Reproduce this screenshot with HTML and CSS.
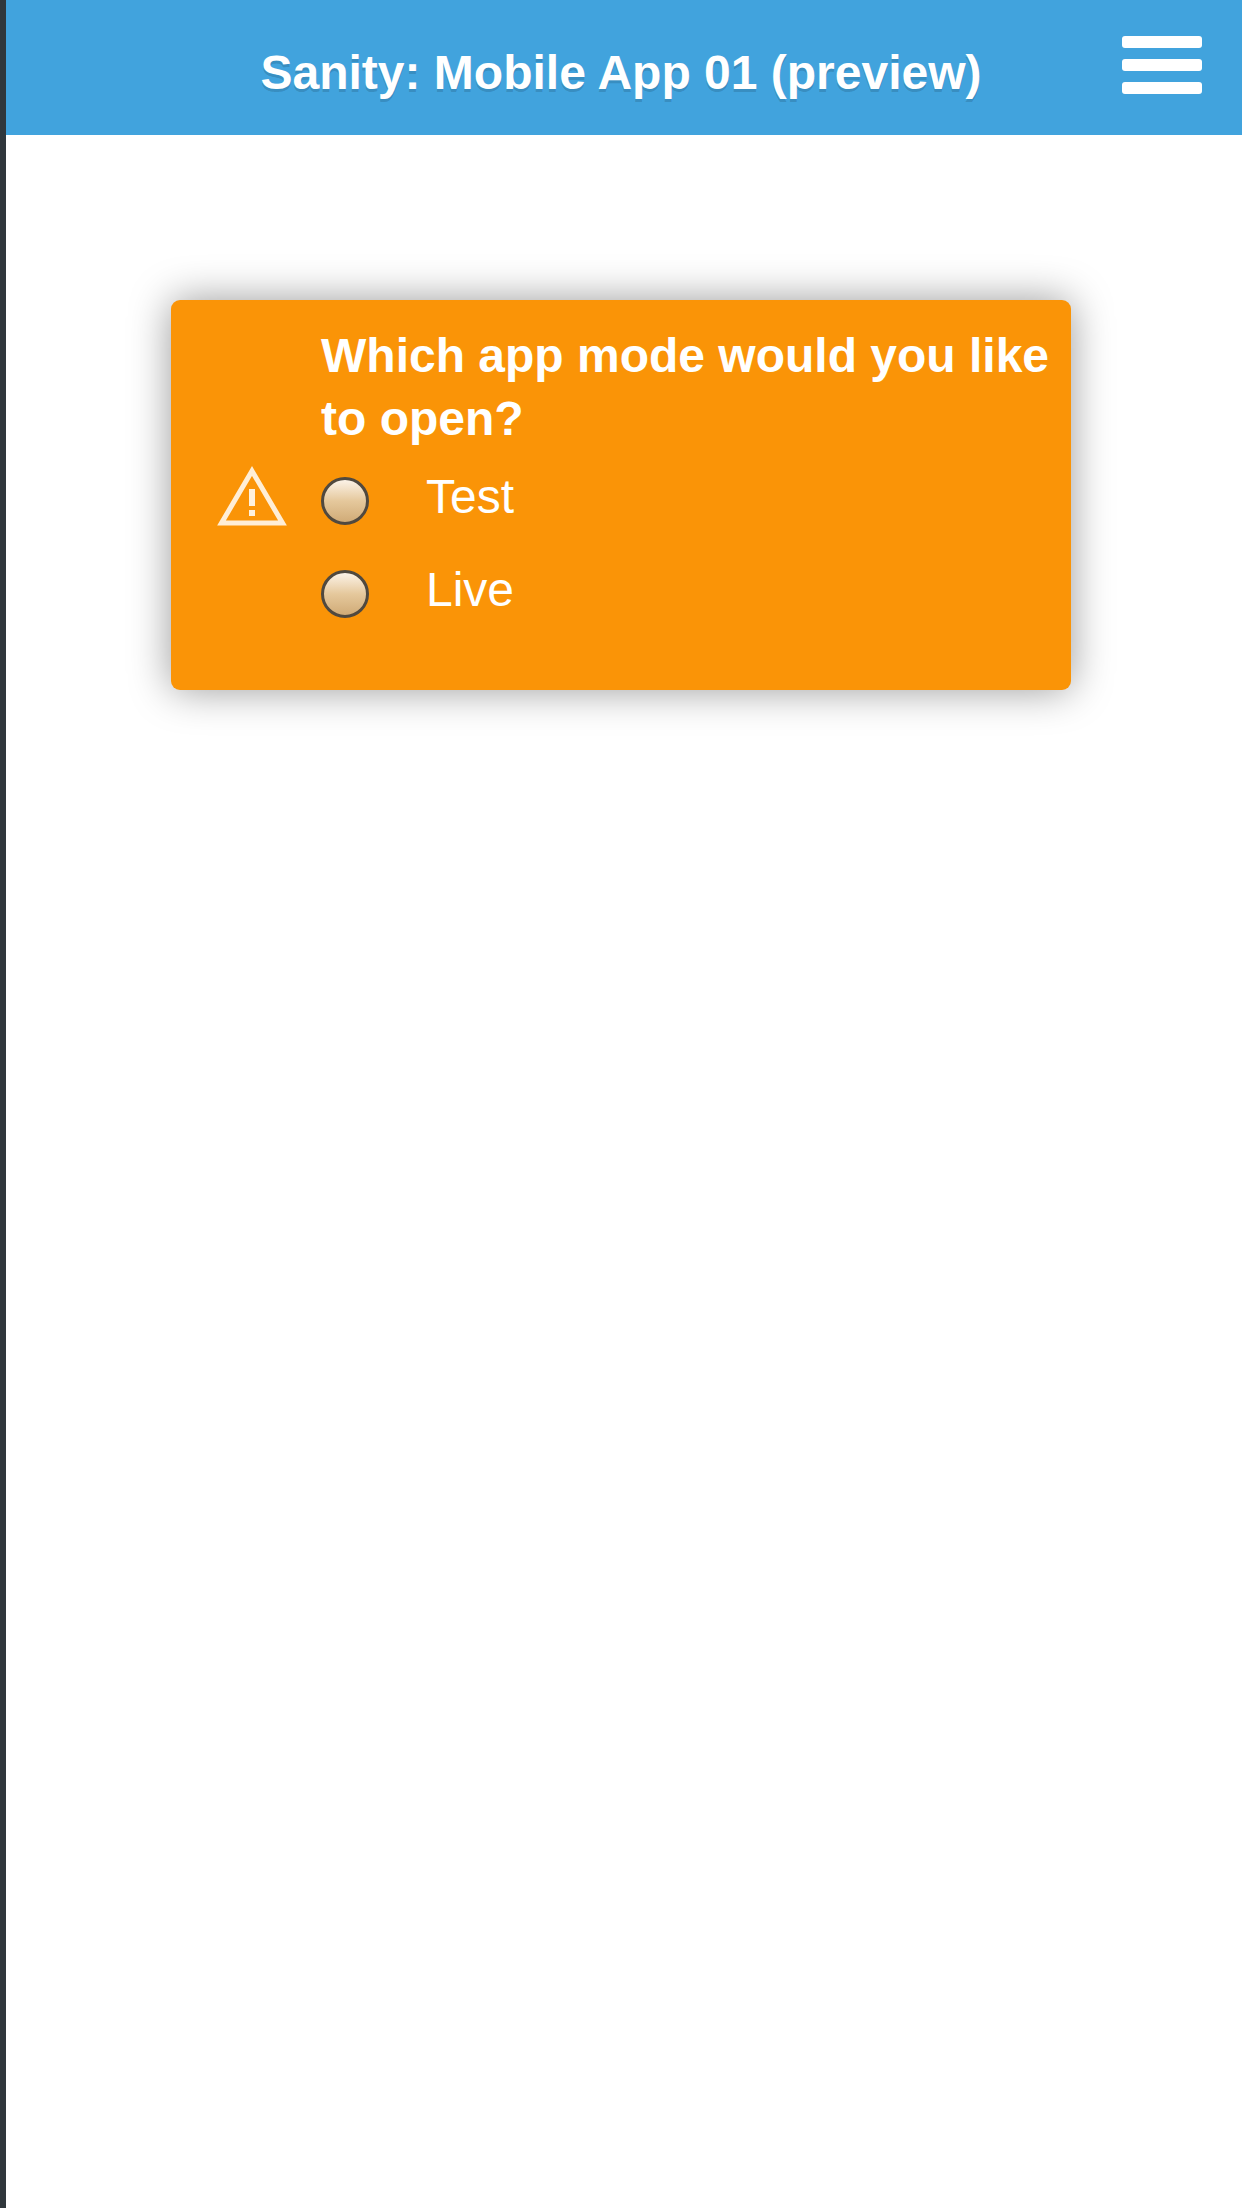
FILE: index.html
```html
<!DOCTYPE html>
<html lang="en">
<head>
  <meta charset="utf-8">
  <meta name="viewport" content="width=device-width, initial-scale=1">
  <title>Sanity: Mobile App 01 (preview)</title>
  <link rel="stylesheet" href="styles.css">
</head>
<body class="app">
  <header class="topbar">
    <h1 class="topbar-title">Sanity: Mobile App 01 (preview)</h1>
    <button class="menu-button" type="button" aria-label="Menu">
      <svg class="menu-icon" viewBox="0 0 80 58" aria-hidden="true">
        <rect width="80" height="12" rx="3"/>
        <rect y="23" width="80" height="12" rx="3"/>
        <rect y="46" width="80" height="12" rx="3"/>
      </svg>
    </button>
  </header>
  <main class="content">
    <form class="notice">
      <svg class="notice-icon" viewBox="0 0 72 62" aria-hidden="true">
        <path class="notice-outline" d="M36 7 L66.500 59 H5.500 Z"/>
        <path class="notice-mark" d="M33 25 H39 V42 H33 Z M33 46 H39 V52 H33 Z"/>
      </svg>
      <fieldset class="choices">
        <legend class="question">Which app mode would you like to open?</legend>
        <div class="choice">
          <input class="choice-radio" type="radio" name="mode" id="mode-test" value="test">
          <label class="choice-label" for="mode-test">Test</label>
        </div>
        <div class="choice">
          <input class="choice-radio" type="radio" name="mode" id="mode-live" value="live">
          <label class="choice-label" for="mode-live">Live</label>
        </div>
      </fieldset>
    </form>
  </main>
</body>
</html>
```

FILE: styles.css
```css
* {
  box-sizing: border-box;
}

.app {
  margin: 0;
  min-height: 100vh;
  border-left: 6px solid #30373c;
  background: #fff;
  color: #fff;
  font-family: "Helvetica Neue", Helvetica, "Liberation Sans", Arial, sans-serif;
  font-size: 48px;
}

.topbar {
  display: flex;
  align-items: flex-start;
  padding: 36px 40px 25px 114px;
  background: #41a3dd;
}

.topbar-title {
  flex: 1;
  margin: 0;
  font-size: 48px;
  font-weight: 700;
  line-height: 74px;
  text-align: center;
  text-shadow: 0 3px 0 rgba(0, 0, 0, 0.15);
}

.menu-button {
  padding: 0;
  border: 0;
  background: none;
  cursor: pointer;
}

.menu-icon {
  display: block;
  width: 80px;
  height: 58px;
  fill: #fff;
}

.content {
  padding: 165px 171px 48px 165px;
}

.notice {
  display: flex;
  align-items: center;
  gap: 33px;
  padding: 24px 18px 54px 45px;
  border-radius: 9px;
  background: #fa9407;
  box-shadow: 0 0 42px rgba(0, 0, 0, 0.4);
}

.notice-icon {
  flex: none;
  width: 72px;
  height: 62px;
  margin-top: 30px;
}

.notice-outline {
  fill: none;
  stroke: #ffeed6;
  stroke-width: 5;
}

.notice-mark {
  fill: #fff1dc;
}

.choices {
  flex: 1;
  min-width: 0;
  margin: 0;
  padding: 0;
  border: 0;
}

.question {
  padding: 0;
  font-weight: 700;
  line-height: 63px;
}

.choice {
  display: flex;
  align-items: flex-start;
  gap: 57px;
  padding: 15px 0;
}

.choice-radio {
  appearance: none;
  flex: none;
  width: 48px;
  height: 48px;
  margin: 12px 0 0;
  border: 3px solid #50493f;
  border-radius: 50%;
  background: linear-gradient(#fcf3e8, #e5c89c 50%, #d0ab77);
}

.choice-radio:checked {
  box-shadow: inset 0 0 0 9px #f3dfc2;
  background: #50493f;
}

.choice-label {
  line-height: 63px;
}
```
